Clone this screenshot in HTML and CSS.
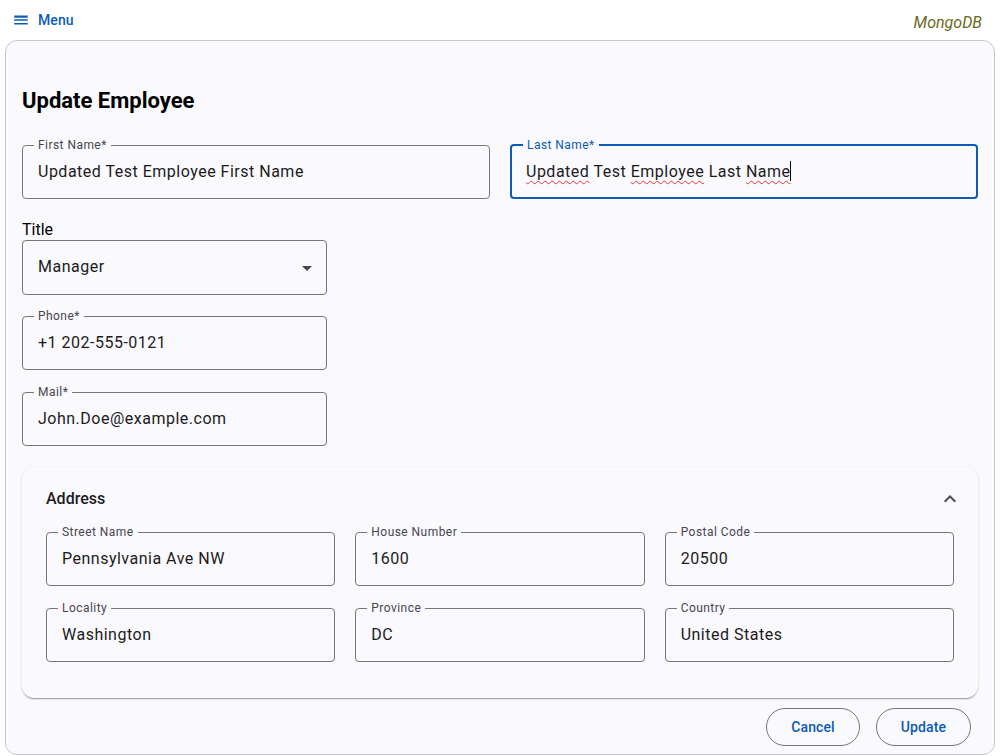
FILE: index.html
```html
<!DOCTYPE html>
<html lang="en">
<head>
<meta charset="utf-8">
<title>Update Employee</title>
<link rel="stylesheet" href="styles.css">
</head>
<body>
<header class="topbar">
  <button class="menu-btn" type="button">
    <svg class="menu-icon" viewBox="0 0 24 24" aria-hidden="true"><path d="M3 18h18v-2H3v2zm0-5h18v-2H3v2zm0-6v2h18V6H3z"/></svg>
    <span>Menu</span>
  </button>
  <span class="brand">MongoDB</span>
</header>
<main class="card">
  <h1 class="title">Update Employee</h1>
  <div class="row-two">
    <fieldset class="field"><legend>First Name*</legend><div class="value">Updated Test Employee First Name</div></fieldset>
    <fieldset class="field focused"><legend>Last Name*</legend><div class="value"><span class="typo">Updated</span> Test <span class="typo">Employee</span> Last <span class="typo">Name</span><span class="caret"></span></div></fieldset>
  </div>
  <div class="stack">
    <div class="plain-label">Title</div>
    <div class="select">
      <span class="value">Manager</span>
      <svg class="drop-icon" viewBox="0 0 24 24" aria-hidden="true"><path d="M7 10l5 5 5-5z"/></svg>
    </div>
    <fieldset class="field"><legend>Phone*</legend><div class="value">+1 202-555-0121</div></fieldset>
    <fieldset class="field"><legend>Mail*</legend><div class="value">John.Doe@example.com</div></fieldset>
  </div>
  <section class="panel">
    <div class="panel-head">
      <span class="panel-title">Address</span>
      <svg class="chev" viewBox="0 0 24 24" aria-hidden="true"><path d="M12 8l-6 6 1.41 1.41L12 10.83l4.59 4.58L18 14z"/></svg>
    </div>
    <div class="grid-three">
      <fieldset class="field"><legend>Street Name</legend><div class="value">Pennsylvania Ave NW</div></fieldset>
      <fieldset class="field"><legend>House Number</legend><div class="value">1600</div></fieldset>
      <fieldset class="field"><legend>Postal Code</legend><div class="value">20500</div></fieldset>
      <fieldset class="field"><legend>Locality</legend><div class="value">Washington</div></fieldset>
      <fieldset class="field"><legend>Province</legend><div class="value">DC</div></fieldset>
      <fieldset class="field"><legend>Country</legend><div class="value">United States</div></fieldset>
    </div>
  </section>
  <div class="actions">
    <button class="pill" type="button">Cancel</button>
    <button class="pill" type="button">Update</button>
  </div>
</main>
</body>
</html>
```
FILE: styles.css
```css
* { box-sizing: border-box; }
html, body { margin: 0; padding: 0; background: #ffffff; }
body {
  font-family: Roboto, "Liberation Sans", Arial, sans-serif;
  color: #1d1b20;
  height: 756px;
  overflow: hidden;
}
.topbar {
  height: 40px;
  display: flex;
  align-items: center;
  justify-content: space-between;
  padding: 0 18px 0 12px;
}
.menu-btn {
  display: flex;
  align-items: center;
  gap: 8px;
  background: none;
  border: 0;
  padding: 0;
  margin-top: -1px;
  font-family: inherit;
  font-size: 14px;
  letter-spacing: 0.1px;
  font-weight: 500;
  color: #0b5cb5;
}
.menu-icon { width: 18px; height: 18px; fill: #0b5cb5; }
.brand {
  font-style: italic;
  font-size: 16px;
  color: #6b6a22;
  margin-top: 4px;
}
.card {
  margin: 0 5px;
  border: 1px solid #c5c6d0;
  border-radius: 12px;
  background: #f9f9fe;
  padding: 44px 16px 8px;
}
.title {
  margin: 0 0 21px;
  font-size: 22px;
  line-height: 32px;
  font-weight: 700;
  color: #000;
}
.row-two {
  display: grid;
  grid-template-columns: 1fr 1fr;
  gap: 20px;
}
.field {
  margin: 0;
  min-width: 0;
  border: 1px solid #79747e;
  border-radius: 4px;
  padding: 8px 15px 14px;
}
.field legend {
  font-size: 12px;
  line-height: 14px;
  letter-spacing: 0.45px;
  color: #49454f;
  padding: 0 4px;
  margin-left: -4px;
}
.field.focused {
  border: 2px solid #0b5cb5;
  padding: 8px 14px 13px;
}
.field.focused legend { color: #0b5cb5; margin-left: -3px; }
.value {
  font-size: 16px;
  line-height: 24px;
  letter-spacing: 0.5px;
  color: #1d1b20;
  white-space: nowrap;
}
.typo {
  text-decoration: underline wavy #e53935;
  text-decoration-thickness: 1px;
  text-underline-offset: 3px;
}
.caret {
  display: inline-block;
  width: 1px;
  height: 20px;
  background: #000;
  vertical-align: -4px;
  margin-left: -0.5px;
}
.stack {
  width: 305px;
  display: flex;
  flex-direction: column;
  gap: 15px;
  margin-top: 19px;
}
.plain-label {
  font-size: 16px;
  line-height: 24px;
  color: #000;
  margin-bottom: -17px;
}
.select {
  height: 55px;
  border: 1px solid #79747e;
  border-radius: 4px;
  display: flex;
  align-items: center;
  justify-content: space-between;
  padding: 0 7px 2px 15px;
  margin-bottom: -1px;
}
.drop-icon { width: 24px; height: 24px; fill: #49454f; margin-top: 3px; }
.panel {
  margin-top: 21px;
  background: #f9f9fe;
  border-radius: 12px;
  box-shadow: 0 2px 1px -1px rgba(0,0,0,0.2), 0 1px 1px 0 rgba(0,0,0,0.14), 0 1px 3px 0 rgba(0,0,0,0.12);
  padding: 0 0 36px;
}
.panel-head {
  display: flex;
  align-items: center;
  justify-content: space-between;
  padding: 20px 16px 0 24px;
}
.panel-title {
  font-size: 16px;
  line-height: 24px;
  font-weight: 500;
  color: #1d1b20;
}
.chev { width: 24px; height: 24px; fill: #49454f; }
.grid-three {
  display: grid;
  grid-template-columns: repeat(3, 1fr);
  column-gap: 20px;
  row-gap: 15px;
  padding: 14px 24px 0;
}
.actions {
  display: flex;
  justify-content: flex-end;
  gap: 16px;
  margin-top: 10px;
  padding-right: 7px;
}
.pill {
  height: 38px;
  border: 1px solid #79747e;
  border-radius: 19px;
  background: transparent;
  padding: 0 24px;
  font-family: inherit;
  font-size: 14px;
  letter-spacing: 0.1px;
  font-weight: 500;
  color: #0b5cb5;
}
```
